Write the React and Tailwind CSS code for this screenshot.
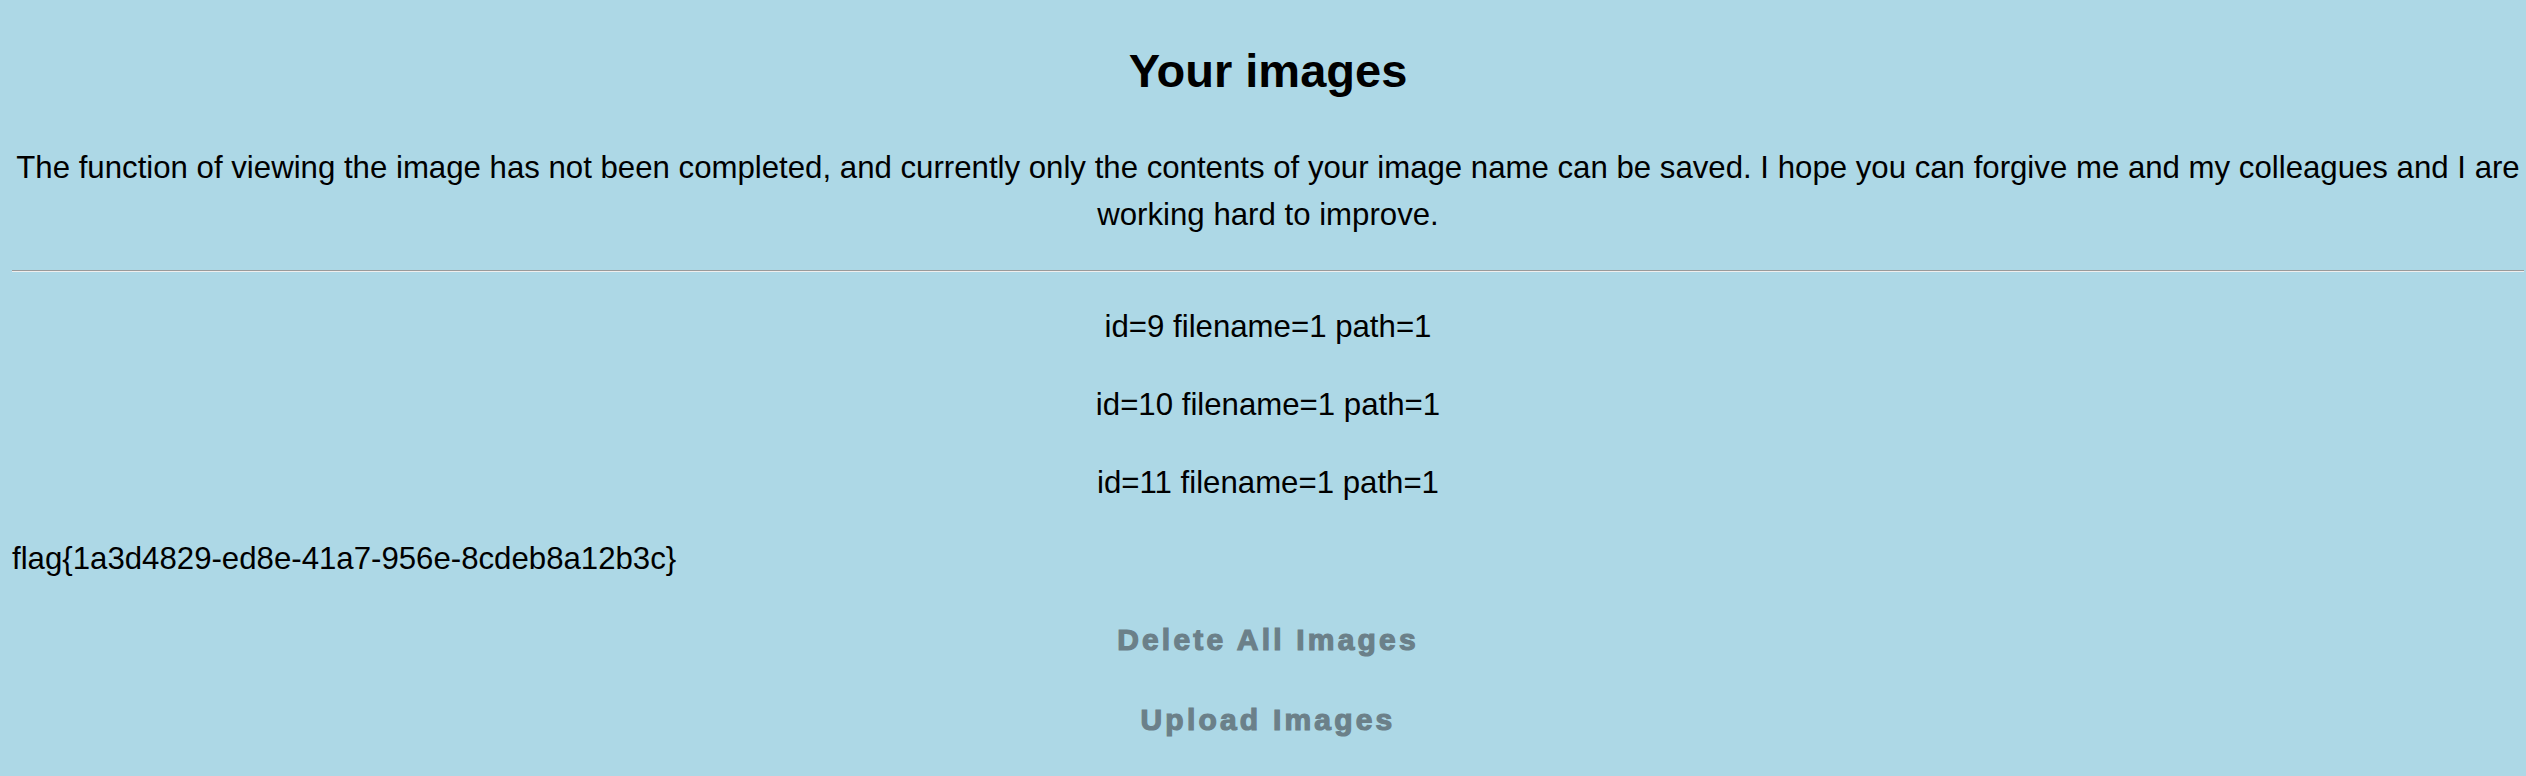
const images = [
  { id: 9, filename: "1", path: "1" },
  { id: 10, filename: "1", path: "1" },
  { id: 11, filename: "1", path: "1" },
];

const App = () => {
  return (
    <div className="min-h-screen bg-[#add8e6] pl-[12px] pr-[2px] pt-[45px] text-[31.2px] text-black font-['Liberation_Sans',Arial,sans-serif]">
      <h2 className="text-center text-[47px] font-bold leading-[52px]">Your images</h2>

      <p className="mt-[47px] text-center leading-[47px]">
        The function of viewing the image has not been completed, and currently only the contents of your image
        name can be saved. I hope you can forgive me and my colleagues and I are working hard to improve.
      </p>

      <hr className="mt-[32px] h-0 border-t border-b border-t-[#9a9a9a] border-b-[#eeeeee]" />

      <div className="mt-[31px]">
        {images.map((img) => (
          <p key={img.id} className="mb-[30px] text-center leading-[48px]">
            id={img.id} filename={img.filename} path={img.path}
          </p>
        ))}
      </div>

      <div className="-mt-[2px] leading-[48px]">flag{"{"}1a3d4829-ed8e-41a7-956e-8cdeb8a12b3c{"}"}</div>

      <div className="mt-[33px] flex flex-col items-center gap-[32px]">
        <button className="text-[30px] leading-[48px] font-bold tracking-[3.2px] text-[#6b8089] [-webkit-text-stroke:1.2px_#6b8089]">
          Delete All Images
        </button>
        <button className="text-[30px] leading-[48px] font-bold tracking-[3.2px] text-[#6b8089] [-webkit-text-stroke:1.2px_#6b8089]">
          Upload Images
        </button>
      </div>
    </div>
  );
};

export default App;
